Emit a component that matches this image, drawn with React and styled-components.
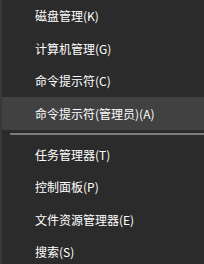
import styled, { createGlobalStyle } from 'styled-components';

const GlobalStyle = createGlobalStyle`
  body {
    margin: 0;
    background: #2b2b2b;
  }
`;

const Menu = styled.ul`
  list-style-type: none;
  margin: 0;
  padding: 0;
  width: 204px;
  height: 264px;
  overflow: hidden;
  box-sizing: border-box;
  background: #2b2b2b;
  border-left: 2px solid #383838;
  font-family: 'Noto Sans CJK SC', 'Noto Sans', sans-serif;
`;

const MenuItem = styled.li`
  display: flex;
  align-items: center;
  height: 32.5px;
  padding-left: 33px;
  margin-top: ${({ first }) => (first ? '-0.5px' : '0')};
  color: #ffffff;
  font-size: 12px;
  background: ${({ active }) => (active ? '#414141' : 'transparent')};
  white-space: nowrap;
`;

const Divider = styled.li`
  height: 1.5px;
  margin: 3.5px 0 3.5px 8px;
  background: #7c7c7c;
`;

const items = [
  '磁盘管理(K)',
  '计算机管理(G)',
  '命令提示符(C)',
  '命令提示符(管理员)(A)',
];

const items2 = ['任务管理器(T)', '控制面板(P)', '文件资源管理器(E)', '搜索(S)'];

export default function App() {
  return (
    <>
      <GlobalStyle />
      <Menu>
        {items.map((label, i) => (
          <MenuItem key={label} first={i === 0} active={i === 3}>
            {label}
          </MenuItem>
        ))}
        <Divider />
        {items2.map((label) => (
          <MenuItem key={label}>{label}</MenuItem>
        ))}
      </Menu>
    </>
  );
}
